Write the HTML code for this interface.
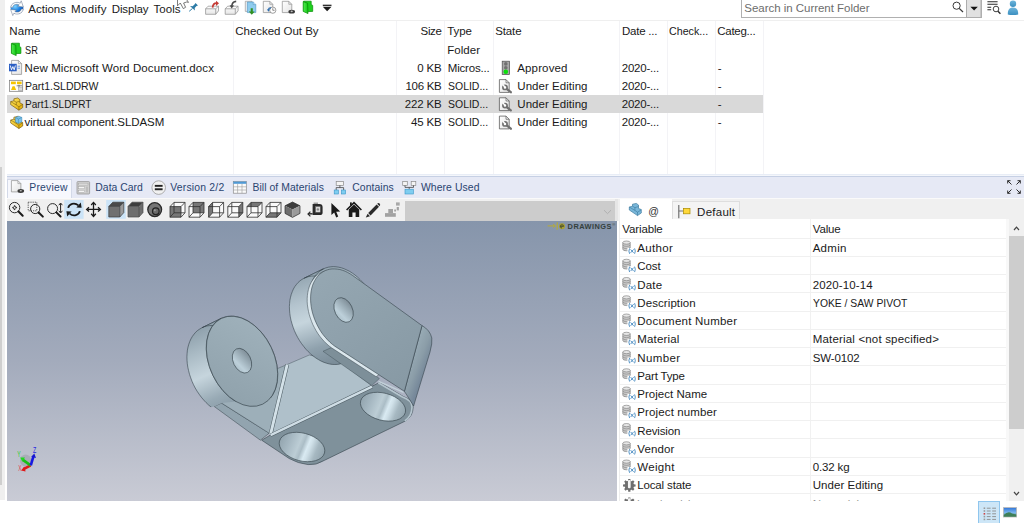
<!DOCTYPE html>
<html>
<head>
<meta charset="utf-8">
<title>PDM File Explorer</title>
<style>
html,body{margin:0;padding:0;}
body{width:1024px;height:523px;overflow:hidden;background:#fff;position:relative;font-family:"Liberation Sans", sans-serif;}
.a{position:absolute;}
.t{position:absolute;white-space:pre;line-height:16px;height:16px;}
.v{position:absolute;width:1px;background:#f3f3f6;top:21px;height:153px;}
.h{position:absolute;height:1px;background:#f0f0f0;left:620px;width:386px;}
svg{position:absolute;left:0;top:0;}
</style>
</head>
<body>
<div class="a" style="left:0px;top:0px;width:4.5px;height:500.4px;background:#efefef;"></div>
<div class="a" style="left:0px;top:167.3px;width:2.3px;height:317.3px;background:#cfcfcf;"></div>
<div class="a" style="left:0px;top:501px;width:1024px;height:22px;background:#ffffff;"></div>
<div class="a" style="left:7px;top:20px;width:1017px;height:1px;background:#efefef;"></div>
<div class="v" style="left:233px"></div>
<div class="v" style="left:396px"></div>
<div class="v" style="left:444px"></div>
<div class="v" style="left:493px"></div>
<div class="v" style="left:619px"></div>
<div class="v" style="left:667px"></div>
<div class="v" style="left:715px"></div>
<div class="v" style="left:763px"></div>
<div class="a" style="left:7px;top:95px;width:756px;height:18px;background:#d9d9d9;"></div>
<div class="a" style="left:741px;top:-1px;width:239px;height:17px;background:#fff;border:1px solid #b0b0b0;"></div>
<div class="a" style="left:7px;top:174px;width:1017px;height:1px;background:#e8edf6;"></div>
<div class="a" style="left:7px;top:175px;width:1017px;height:1px;background:#f4f6fb;"></div>
<div class="a" style="left:7px;top:176px;width:1017px;height:22px;background:#e6e9f5;border-top:1px solid #c6d0e4;box-sizing:border-box;"></div>
<div class="a" style="left:7px;top:178.5px;width:64.5px;height:19.5px;background:#f7f8fd;border:1px solid #d3d9e8;border-bottom:none;box-sizing:border-box;"></div>
<div class="a" style="left:7px;top:198px;width:1017px;height:1.4px;background:#fafafa;"></div>
<div class="a" style="left:7px;top:199.4px;width:398px;height:21.8px;background:#f0f0f0;"></div>
<div class="a" style="left:405px;top:199.4px;width:210px;height:1.3px;background:#f0f0f0;"></div>
<div class="a" style="left:405px;top:200.7px;width:210px;height:20.5px;background:#cccccc;"></div>
<div class="a" style="left:615px;top:199.4px;width:2.5px;height:21.8px;background:#e6e6e6;"></div>
<div class="a" style="left:617.5px;top:198.6px;width:406.5px;height:302.4px;background:#f0f0f0;"></div>
<div class="a" style="left:617.5px;top:221px;width:2px;height:279.7px;background:#ffffff;"></div>
<div class="a" style="left:619.6px;top:199.4px;width:52.6px;height:21px;background:#ffffff;"></div>
<div class="a" style="left:672.2px;top:201.2px;width:67.6px;height:18.4px;background:#f4f4f4;border:1px solid #dedede;border-bottom:none;box-sizing:border-box;"></div>
<div class="a" style="left:619.5px;top:219.4px;width:386px;height:281.3px;background:#ffffff;"></div>
<div class="a" style="left:1005.5px;top:219.4px;width:3.2px;height:281.3px;background:#f8f8f8;"></div>
<div class="a" style="left:1008.7px;top:219.4px;width:15.3px;height:281.6px;background:#f0f0f0;"></div>
<div class="a" style="left:1008.7px;top:236px;width:15.3px;height:193.4px;background:#cdcdcd;"></div>
<div class="a" style="left:810px;top:219.4px;width:1px;height:281.3px;background:#f1f1f1;"></div>
<div class="a" style="left:619.2px;top:221px;width:1px;height:279.7px;background:#ededed;"></div>
<div class="h" style="top:238px"></div>
<div class="h" style="top:256px"></div>
<div class="h" style="top:274px"></div>
<div class="h" style="top:292px"></div>
<div class="h" style="top:311px"></div>
<div class="h" style="top:329px"></div>
<div class="h" style="top:347px"></div>
<div class="h" style="top:365px"></div>
<div class="h" style="top:384px"></div>
<div class="h" style="top:402px"></div>
<div class="h" style="top:420px"></div>
<div class="h" style="top:438px"></div>
<div class="h" style="top:457px"></div>
<div class="h" style="top:475px"></div>
<div class="h" style="top:493px"></div>
<svg width="1024" height="523" viewBox="0 0 1024 523">
<defs>
<linearGradient id="gview" x1="0" y1="0" x2="0" y2="1"><stop offset="0" stop-color="#8695ab"/><stop offset="0.5" stop-color="#a3abbc"/><stop offset="1" stop-color="#c9cbd5"/></linearGradient>
<linearGradient id="gcyl1" gradientUnits="userSpaceOnUse" x1="205" y1="322" x2="245" y2="412"><stop offset="0" stop-color="#8a9ca8"/><stop offset="0.25" stop-color="#a9bac4"/><stop offset="0.5" stop-color="#c6d5dd"/><stop offset="0.75" stop-color="#98aab5"/><stop offset="1" stop-color="#7f919d"/></linearGradient>
<linearGradient id="gcyl2" gradientUnits="userSpaceOnUse" x1="305" y1="272" x2="335" y2="362"><stop offset="0" stop-color="#90a2ae"/><stop offset="0.3" stop-color="#b4c4ce"/><stop offset="0.5" stop-color="#c6d5dd"/><stop offset="0.8" stop-color="#8fa1ad"/><stop offset="1" stop-color="#7b8d99"/></linearGradient>
<linearGradient id="gface1" gradientUnits="userSpaceOnUse" x1="215" y1="325" x2="270" y2="400"><stop offset="0" stop-color="#9fb1bb"/><stop offset="1" stop-color="#8fa1ab"/></linearGradient>
<linearGradient id="gear" gradientUnits="userSpaceOnUse" x1="320" y1="270" x2="410" y2="390"><stop offset="0" stop-color="#95a7b2"/><stop offset="1" stop-color="#8799a4"/></linearGradient>
<linearGradient id="gbend" gradientUnits="userSpaceOnUse" x1="410" y1="350" x2="430" y2="358"><stop offset="0" stop-color="#9cafb9"/><stop offset="0.6" stop-color="#8b9da8"/><stop offset="1" stop-color="#76889a"/></linearGradient>
<linearGradient id="ghole" gradientUnits="userSpaceOnUse" x1="238" y1="349" x2="246" y2="373"><stop offset="0" stop-color="#727f89"/><stop offset="0.3" stop-color="#93a4ae"/><stop offset="0.68" stop-color="#bdd0da"/><stop offset="1" stop-color="#a3b6c0"/></linearGradient>
<linearGradient id="ghole2" gradientUnits="userSpaceOnUse" x1="339.6" y1="298.3" x2="347.6" y2="322.3"><stop offset="0" stop-color="#727f89"/><stop offset="0.3" stop-color="#93a4ae"/><stop offset="0.68" stop-color="#bdd0da"/><stop offset="1" stop-color="#a3b6c0"/></linearGradient>
<linearGradient id="gbh1" gradientUnits="userSpaceOnUse" x1="279" y1="443" x2="325" y2="449"><stop offset="0" stop-color="#93a5af"/><stop offset="0.2" stop-color="#a5b7c1"/><stop offset="0.42" stop-color="#bccdd5"/><stop offset="0.51" stop-color="#abbdc6"/><stop offset="0.61" stop-color="#d9eaf2"/><stop offset="0.67" stop-color="#cfe0e8"/><stop offset="0.82" stop-color="#a6b8c1"/><stop offset="1" stop-color="#93a5af"/></linearGradient>
<linearGradient id="gbh2" gradientUnits="userSpaceOnUse" x1="360.4" y1="403" x2="405.6" y2="409"><stop offset="0" stop-color="#93a5af"/><stop offset="0.2" stop-color="#a5b7c1"/><stop offset="0.42" stop-color="#bccdd5"/><stop offset="0.51" stop-color="#abbdc6"/><stop offset="0.61" stop-color="#d9eaf2"/><stop offset="0.67" stop-color="#cfe0e8"/><stop offset="0.82" stop-color="#a6b8c1"/><stop offset="1" stop-color="#93a5af"/></linearGradient>
</defs>
<rect x="7" y="221" width="610" height="280" fill="url(#gview)"/>
<polygon points="214.1,406.4 221.6,403.1 269.2,433.2 260.4,440.2" fill="#92a4af" stroke="#36434b" stroke-width="0.5"/>
<polygon points="221.6,403.1 250,380 287.2,364.5 270.4,434.7 269.2,433.2" fill="#9dafb9" stroke="#36434b" stroke-width="0.4"/>
<polygon points="287.2,364.5 309.3,355 340,362 372,386 270.4,435.5" fill="#afc0ca" stroke="#36434b" stroke-width="0.4"/>
<line x1="287.2" y1="364.5" x2="270.6" y2="434.2" stroke="#4a5860" stroke-width="3.9"/>
<line x1="287.2" y1="364.5" x2="270.6" y2="434.2" stroke="#d3e1e8" stroke-width="2.9"/>
<path d="M261.7,440.2 L270.4,435 L372,386.3 L379.4,382.4 L403.2,396.4 Q413.5,400 413.2,407 Q413,416 406,420.7 L324.3,460.4 Q316,465.5 308,464.6 Q298,463.5 289.2,458.5 Z" fill="#7f919b" stroke="#36434b" stroke-width="0.6"/>
<path d="M379.4,382.4 L403.2,396.4 Q413.5,400 413.2,407 Q413,416 406,420.7" fill="none" stroke="#b5c5ce" stroke-width="1.6" transform="translate(-1.2 0.3)"/>
<line x1="270.6" y1="435.2" x2="372" y2="386.6" stroke="#4a5860" stroke-width="3.4"/>
<line x1="270.6" y1="435.2" x2="372" y2="386.6" stroke="#cfdde5" stroke-width="2.4"/>
<ellipse cx="302" cy="447" rx="23.3" ry="13.9" transform="rotate(14.8 302 447)" fill="url(#gbh1)" stroke="#36434b" stroke-width="0.6"/>
<ellipse cx="383" cy="406.7" rx="23.1" ry="13.6" transform="rotate(14.8 383 406.7)" fill="url(#gbh2)" stroke="#36434b" stroke-width="0.6"/>
<path d="M344.7,362.3 L342.4,363.3 L340.0,363.9 L337.5,364.4 L334.9,364.5 L332.2,364.4 L329.5,364.0 L326.8,363.3 L324.1,362.4 L321.3,361.2 L318.6,359.7 L315.9,358.0 L313.3,356.1 L310.7,354.0 L308.2,351.6 L305.8,349.1 L303.6,346.3 L301.4,343.4 L299.4,340.4 L297.6,337.3 L295.9,334.0 L294.4,330.7 L293.1,327.2 L292.0,323.8 L291.0,320.3 L290.3,316.9 L289.8,313.4 L289.5,310.0 L289.4,306.6 L289.6,303.4 L289.9,300.2 L290.5,297.2 L291.3,294.3 L292.3,291.6 L293.4,289.0 L294.8,286.6 L296.4,284.5 L298.1,282.5 L300.0,280.8 L302.0,279.4 L304.2,278.2 L323.5,268.8 L325.8,267.9 L328.2,267.2 L330.8,266.8 L333.3,266.6 L336.0,266.8 L338.7,267.2 L341.4,267.8 L344.2,268.8 L346.9,270.0 L349.7,271.4 L352.3,273.1 L355.0,275.0 L357.6,277.2 L360.0,279.5 L362.4,282.1 L364.7,284.8 L366.8,287.7 L368.8,290.7 L370.7,293.9 L372.4,297.1 L373.9,300.5 L375.2,303.9 L376.3,307.3 L377.2,310.8 L377.9,314.3 L378.4,317.7 L378.7,321.1 L378.8,324.5 L378.7,327.8 L378.3,330.9 L377.8,334.0 L377.0,336.8 L376.0,339.6 L374.8,342.1 L373.5,344.5 L371.9,346.7 L370.2,348.6 L368.3,350.3 L366.2,351.8 L364.1,353.0Z" fill="url(#gcyl2)" stroke="#36434b" stroke-width="0.6"/>
<path d="M304.2,278.2 L306.5,277.2 L308.9,276.5 L311.4,276.1 L314.0,276.0 L316.7,276.1 L319.4,276.5 L322.1,277.2 L324.8,278.1 L327.6,279.3 L330.3,280.7 L333.0,282.4 L335.6,284.4 L338.2,286.5 L340.7,288.9 L343.1,291.4 L345.3,294.1 L347.5,297.0 L349.5,300.0 L351.3,303.2 L353.0,306.5 L354.5,309.8 L355.8,313.2 L356.9,316.7 L357.9,320.1 L358.6,323.6 L359.1,327.1 L359.4,330.5 L359.5,333.8 L359.3,337.1 L359.0,340.2 L358.4,343.3 L357.6,346.2 L356.6,348.9 L355.5,351.5 L354.1,353.8 L352.5,356.0 L350.8,357.9 L348.9,359.6 L346.9,361.1 L344.7,362.3 L364.1,353.0 L361.8,353.9 L359.4,354.6 L356.8,355.0 L354.3,355.2 L351.6,355.0 L348.9,354.6 L346.2,354.0 L343.4,353.0 L340.7,351.8 L337.9,350.4 L335.3,348.7 L332.6,346.8 L330.0,344.6 L327.6,342.3 L325.2,339.7 L322.9,337.0 L320.8,334.1 L318.8,331.1 L316.9,327.9 L315.2,324.7 L313.7,321.3 L312.4,317.9 L311.3,314.5 L310.4,311.0 L309.7,307.5 L309.2,304.1 L308.9,300.7 L308.8,297.3 L308.9,294.0 L309.3,290.9 L309.8,287.8 L310.6,285.0 L311.6,282.2 L312.8,279.7 L314.1,277.3 L315.7,275.1 L317.4,273.2 L319.3,271.5 L321.4,270.0 L323.5,268.8Z" fill="url(#gcyl2)" stroke="#36434b" stroke-width="0.6"/>
<polygon points="323,351.3 334.3,346.3 379.4,378.5 371.9,385.5" fill="#7d8f99" stroke="#36434b" stroke-width="0.4"/>
<path d="M400.0,330.0 L349.5,277.2 L346.9,275.5 L344.3,274.1 L341.7,272.8 L339.1,271.9 L336.5,271.1 L333.9,270.7 L331.4,270.5 L328.9,270.5 L326.5,270.8 L324.2,271.4 L322.0,272.2 L319.8,273.3 L317.9,274.6 L316.0,276.1 L314.3,277.9 L312.8,279.9 L311.4,282.0 L310.2,284.4 L309.2,286.9 L308.4,289.6 L307.8,292.5 L307.4,295.5 L307.2,298.5 L307.2,301.7 L307.4,304.9 L307.9,308.2 L308.5,311.5 L309.3,314.8 L310.3,318.0 L311.5,321.3 L312.8,324.5 L314.4,327.6 L316.1,330.7 L317.9,333.6 L319.9,336.4 L322.0,339.0 L324.3,341.5 L326.6,343.8 L329.0,345.9 L331.5,347.8 L376.1,376.7 L381.4,373.1 Z" fill="#dbe7ed" stroke="#36434b" stroke-width="0.5"/>
<line x1="378.6" y1="381.4" x2="403.6" y2="392.4" stroke="#c3d2da" stroke-width="1.3"/>
<path d="M422,325.6 Q430,330 431.8,338 Q432.5,343 430,352 L413.6,406 Q410,400 404.4,391.3 Z" fill="url(#gbend)" stroke="#36434b" stroke-width="0.6"/>
<path d="M422.0,325.6 L352.8,275.6 L350.2,273.9 L347.7,272.5 L345.1,271.2 L342.5,270.3 L339.9,269.5 L337.3,269.1 L334.7,268.9 L332.2,268.9 L329.8,269.2 L327.5,269.8 L325.3,270.6 L323.2,271.7 L321.2,273.0 L319.3,274.5 L317.7,276.3 L316.1,278.3 L314.8,280.4 L313.6,282.8 L312.6,285.3 L311.8,288.0 L311.2,290.9 L310.8,293.8 L310.6,296.9 L310.6,300.1 L310.8,303.3 L311.2,306.6 L311.8,309.9 L312.6,313.2 L313.6,316.4 L314.8,319.7 L316.2,322.9 L317.7,326.0 L319.4,329.1 L321.2,332.0 L323.2,334.8 L325.4,337.4 L327.6,339.9 L329.9,342.2 L332.3,344.3 L334.8,346.2 L404.4,391.3 Z" fill="url(#gear)" stroke="#36434b" stroke-width="0.6"/>
<ellipse cx="343.6" cy="310.0" rx="13.0" ry="8.8" transform="rotate(64.3 343.6 310.0)" fill="url(#ghole2)" stroke="#36434b" stroke-width="0.6"/>
<clipPath id="cl1"><polygon points="150,280 300,280 300,395 221.6,403.1 214.1,406.4 150,420"/></clipPath>
<g clip-path="url(#cl1)"><path d="M243.3,413.5 L241.0,414.5 L238.5,415.2 L236.0,415.6 L233.3,415.8 L230.6,415.7 L227.8,415.2 L225.1,414.6 L222.3,413.6 L219.5,412.4 L216.7,410.9 L213.9,409.2 L211.2,407.2 L208.6,405.0 L206.1,402.6 L203.7,400.0 L201.3,397.2 L199.2,394.3 L197.1,391.2 L195.2,388.0 L193.5,384.7 L192.0,381.3 L190.7,377.8 L189.5,374.3 L188.6,370.7 L187.8,367.2 L187.3,363.7 L187.0,360.2 L186.9,356.8 L187.1,353.4 L187.4,350.2 L188.0,347.1 L188.8,344.2 L189.8,341.4 L191.0,338.8 L192.4,336.4 L194.0,334.2 L195.7,332.2 L197.7,330.4 L199.8,329.0 L202.0,327.7 L221.3,318.4 L223.7,317.4 L226.1,316.7 L228.7,316.3 L231.3,316.1 L234.0,316.3 L236.8,316.7 L239.6,317.4 L242.4,318.3 L245.2,319.5 L248.0,321.0 L250.7,322.7 L253.4,324.7 L256.0,326.9 L258.6,329.3 L261.0,331.9 L263.3,334.7 L265.5,337.6 L267.5,340.7 L269.4,343.9 L271.1,347.3 L272.7,350.7 L274.0,354.1 L275.1,357.7 L276.1,361.2 L276.8,364.7 L277.3,368.3 L277.6,371.7 L277.7,375.2 L277.6,378.5 L277.2,381.7 L276.6,384.8 L275.8,387.8 L274.8,390.6 L273.6,393.2 L272.2,395.6 L270.7,397.8 L268.9,399.8 L267.0,401.5 L264.9,403.0 L262.7,404.2Z" fill="url(#gcyl1)" stroke="#36434b" stroke-width="0.6"/>
<path d="M202.0,327.7 L204.3,326.7 L206.8,326.0 L209.3,325.6 L212.0,325.5 L214.7,325.6 L217.5,326.0 L220.2,326.7 L223.0,327.7 L225.8,328.9 L228.6,330.4 L231.4,332.1 L234.1,334.0 L236.7,336.2 L239.2,338.6 L241.6,341.2 L244.0,344.0 L246.1,347.0 L248.2,350.0 L250.1,353.3 L251.8,356.6 L253.3,360.0 L254.6,363.5 L255.8,367.0 L256.7,370.5 L257.5,374.1 L258.0,377.6 L258.3,381.1 L258.4,384.5 L258.2,387.8 L257.9,391.0 L257.3,394.1 L256.5,397.1 L255.5,399.9 L254.3,402.5 L252.9,404.9 L251.3,407.1 L249.6,409.1 L247.6,410.8 L245.5,412.3 L243.3,413.5 L262.7,404.2 L260.3,405.2 L257.9,405.9 L255.3,406.3 L252.7,406.5 L250.0,406.3 L247.2,405.9 L244.4,405.2 L241.6,404.3 L238.8,403.1 L236.0,401.6 L233.3,399.9 L230.6,397.9 L228.0,395.7 L225.4,393.3 L223.0,390.7 L220.7,387.9 L218.5,385.0 L216.5,381.9 L214.6,378.7 L212.9,375.3 L211.3,371.9 L210.0,368.5 L208.9,364.9 L207.9,361.4 L207.2,357.9 L206.7,354.3 L206.4,350.9 L206.3,347.4 L206.4,344.1 L206.8,340.9 L207.4,337.8 L208.2,334.8 L209.2,332.0 L210.4,329.4 L211.8,327.0 L213.3,324.8 L215.1,322.8 L217.0,321.1 L219.1,319.6 L221.3,318.4Z" fill="url(#gcyl1)" stroke="#36434b" stroke-width="0.6"/></g>
<ellipse cx="242.0" cy="361.3" rx="47.6" ry="32.3" transform="rotate(64.3 242.0 361.3)" fill="url(#gface1)" stroke="#36434b" stroke-width="0.6"/>
<ellipse cx="242.0" cy="360.7" rx="13.0" ry="8.8" transform="rotate(64.3 242.0 360.7)" fill="url(#ghole)" stroke="#36434b" stroke-width="0.6"/>
<ellipse cx="25.6" cy="460.6" rx="5.6" ry="6" fill="#a9adb8"/>
<line x1="30.6" y1="465.4" x2="23.6" y2="469.2" stroke="#e01818" stroke-width="2.6"/><polygon points="21,470.6 24.4,466.6 25.6,471.4" fill="#e01818"/>
<line x1="30.6" y1="465.4" x2="22.6" y2="459.6" stroke="#18c018" stroke-width="2.6"/><polygon points="20.2,457.6 25,457.4 22.4,461.8" fill="#20d820"/>
<line x1="30.8" y1="465.4" x2="33.4" y2="456.4" stroke="#1818e0" stroke-width="2.6"/><polygon points="34.3,453.6 36,458 31.2,456.8" fill="#1818d0"/>
<defs>
<radialGradient id="gglobe" cx="0.35" cy="0.35" r="0.8"><stop offset="0" stop-color="#7fd3ff"/><stop offset="0.5" stop-color="#1c7fe0"/><stop offset="1" stop-color="#123c9c"/></radialGradient>
<linearGradient id="gbox" x1="0" y1="0" x2="0" y2="1"><stop offset="0" stop-color="#ffffff"/><stop offset="1" stop-color="#e6e6e6"/></linearGradient>
<linearGradient id="gpage" x1="0" y1="0" x2="1" y2="1"><stop offset="0" stop-color="#ffffff"/><stop offset="1" stop-color="#e4e4e4"/></linearGradient>
<linearGradient id="ggreen" x1="0" y1="0" x2="1" y2="0"><stop offset="0" stop-color="#55ee55"/><stop offset="1" stop-color="#10c410"/></linearGradient>
<linearGradient id="gyel" x1="0" y1="0" x2="1" y2="1"><stop offset="0" stop-color="#ffe766"/><stop offset="1" stop-color="#e0a800"/></linearGradient>
<linearGradient id="gcubeF" x1="0" y1="0" x2="0" y2="1"><stop offset="0" stop-color="#7a7a7a"/><stop offset="1" stop-color="#6a6a6a"/></linearGradient>
<linearGradient id="gperson" x1="0" y1="0" x2="0" y2="1"><stop offset="0" stop-color="#6fb6dc"/><stop offset="1" stop-color="#3b8fc0"/></linearGradient>
<linearGradient id="gpic" x1="0" y1="0" x2="0" y2="1"><stop offset="0" stop-color="#2f74d8"/><stop offset="0.55" stop-color="#7db8ee"/><stop offset="1" stop-color="#4b8a5a"/></linearGradient>
</defs><g transform="translate(10 0.6)"><ellipse cx="7" cy="7.5" rx="6.4" ry="5.7" fill="url(#gglobe)"/><path d="M0.7,6.8 C1.2,2.6 6.4,0.4 10.2,2.6 L11.2,0.2 L13.4,6.4 L7.6,5.6 L9.2,4.3 C6.6,3 3.2,3.8 2.6,6.8 Z" fill="#ffffff" stroke="#6d7a92" stroke-width="0.55"/><g transform="rotate(180 7 7.6)"><path d="M0.7,6.8 C1.2,2.6 6.4,0.4 10.2,2.6 L11.2,0.2 L13.4,6.4 L7.6,5.6 L9.2,4.3 C6.6,3 3.2,3.8 2.6,6.8 Z" fill="#ffffff" stroke="#6d7a92" stroke-width="0.55"/></g></g><path d="M177.5,-1 V5.8 L180.3,3 L183.3,8.6 L185.6,7.3 L183.6,3 L186.7,2 L188.5,2.4 L186.2,-1" fill="#fff" stroke="#444" stroke-width="0.7"/><path d="M195.5,2.9 L198,5.4 L196.5,6 L194.7,7.9 L194.9,10.4 L190,6.1 L192.6,6.2 L194.5,4.4 Z" fill="#2d7ba6"/><path d="M192.5,8.4 L189.2,11.3" stroke="#2d7ba6" stroke-width="1" fill="none"/><g transform="translate(205.3 0)"><path d="M0.3,8.8 L2.8,6.2 L13.2,6.2 L13.2,10.9 L10.4,14.3 L0.3,14.3 Z" fill="url(#gbox)" stroke="#8c8c8c" stroke-width="0.7"/><path d="M0.3,8.8 L10.4,8.8 L13.2,6.2 M10.4,8.8 L10.4,14.3" fill="none" stroke="#8c8c8c" stroke-width="0.7"/></g><path d="M212.6,7.6 C212.8,4.6 214.6,3.2 216.6,3.2" fill="none" stroke="#c43a34" stroke-width="1.7"/><polygon points="216,0.7 219,3.3 216,5.9" fill="#c43a34"/><g transform="translate(224.9 0)"><path d="M0.3,8.8 L2.8,6.2 L13.2,6.2 L13.2,10.9 L10.4,14.3 L0.3,14.3 Z" fill="url(#gbox)" stroke="#8c8c8c" stroke-width="0.7"/><path d="M0.3,8.8 L10.4,8.8 L13.2,6.2 M10.4,8.8 L10.4,14.3" fill="none" stroke="#8c8c8c" stroke-width="0.7"/></g><path d="M236.2,1.4 C233.6,1.6 232,3.6 231.8,6" fill="none" stroke="#4a4a4a" stroke-width="1.6"/><polygon points="229.6,5.2 234.2,5.6 231.6,8.6" fill="#4a4a4a"/><path d="M245.3,1.3 L252,1.3 L252,11.4 L245.3,11.4Z" fill="#f4f4f4" stroke="#8a8a8a" stroke-width="0.6"/><path d="M247.3,2.0 L253.2,2.0 L255.8,4.6 L255.8,12.6 L247.3,12.6Z" fill="#8fccee" stroke="#4a90c0" stroke-width="0.6"/><path d="M253.2,2.0 L253.2,4.6 L255.8,4.6" fill="#c9e7f7" stroke="#4a90c0" stroke-width="0.5"/><path d="M250.7,8.2 L252.8,8.2 L252.8,11.6 L254.7,11.6 L251.75,14.7 L248.8,11.6 L250.7,11.6Z" fill="#2f8f20"/><path d="M263.3,1.3 h6.5 l3,3 v8.3 h-9.5 Z" fill="url(#gpage)" stroke="#8c8c8c" stroke-width="0.7"/><path d="M269.8,1.3 v3 h3" fill="none" stroke="#8c8c8c" stroke-width="0.6"/><circle cx="272.8" cy="10.2" r="3.1" fill="#fff" stroke="#777" stroke-width="0.7"/><path d="M272.8,8.2 V10.3 H274.6" stroke="#444" stroke-width="0.6" fill="none"/><path d="M271,8 C269.6,7.8 268.6,8.6 268.4,9.8" stroke="#2b6cb0" stroke-width="1.3" fill="none"/><polygon points="267,9.2 270,9.6 268.3,11.8" fill="#2b6cb0"/><path d="M282.3,1.3 h6.5 l3,3 v8.3 h-9.5 Z" fill="url(#gpage)" stroke="#8c8c8c" stroke-width="0.7"/><path d="M288.8,1.3 v3 h3" fill="none" stroke="#8c8c8c" stroke-width="0.6"/><ellipse cx="291.7" cy="11.700000000000001" rx="3.3" ry="1.9" fill="#3a3a3a"/><ellipse cx="291.7" cy="11.4" rx="1.1" ry="0.8" fill="#bbb"/><g transform="translate(303 1)"><path d="M0.6,0.2 L8.2,0.2 L8.2,3.4 L9.7,4.4 L9.7,10.4 L4.8,10.6 L0.6,10 Z" fill="#1fd01f" stroke="#078a07" stroke-width="0.7"/><path d="M0.2,0.6 L4.6,2.2 L5,12.6 L0.2,10.4 Z" fill="url(#ggreen)" stroke="#078a07" stroke-width="0.7"/></g><rect x="322.8" y="4.7" width="8.7" height="1.2" fill="#1a1a1a"/><polygon points="322.8,6.7 331.5,6.7 327.15,11.2" fill="#1a1a1a"/><circle cx="956.6" cy="5.7" r="3.6" fill="none" stroke="#3a3a3a" stroke-width="1"/><line x1="959.2" y1="8.4" x2="963" y2="12" stroke="#3a3a3a" stroke-width="1.3"/><rect x="966.5" y="-0.5" width="14.5" height="18" fill="#e1e1e1" stroke="#adadad" stroke-width="1"/><polygon points="970.4,6.7 977.8,6.7 974.1,10.4" fill="#111"/><path d="M987.4,1.7 H997.6 M987.4,4.2 H997.6 M987.4,7.2 H991.2 M987.4,9.7 H991.2" stroke="#2a2a2a" stroke-width="1.1"/><circle cx="996" cy="9" r="2.8" fill="#fff" stroke="#2a2a2a" stroke-width="0.9"/><line x1="998" y1="11.2" x2="1000.4" y2="13.8" stroke="#2a2a2a" stroke-width="1.3"/><circle cx="1013" cy="3.8" r="3.2" fill="url(#gperson)"/><path d="M1007.8,14.4 C1007.6,9.6 1009.6,7.4 1013,7.4 C1016.4,7.4 1018.4,9.6 1018.2,14.4 C1016,15.2 1010,15.2 1007.8,14.4Z" fill="url(#gperson)"/><g transform="translate(11.2 43)"><path d="M0.6,0.2 L8.2,0.2 L8.2,3.4 L9.7,4.4 L9.7,10.4 L4.8,10.6 L0.6,10 Z" fill="#1fd01f" stroke="#078a07" stroke-width="0.7"/><path d="M0.2,0.6 L4.6,2.2 L5,12.6 L0.2,10.4 Z" fill="url(#ggreen)" stroke="#078a07" stroke-width="0.7"/></g><path d="M11.6,60.4 h6.8 l3.2,3.2 v10.8 h-10 Z" fill="url(#gpage)" stroke="#8c8c8c" stroke-width="0.7"/><path d="M18.400000000000002,60.4 v3.2 h3.2" fill="none" stroke="#8c8c8c" stroke-width="0.6"/><rect x="9" y="63.8" width="7.7" height="7.5" fill="#2b5fc4"/><path d="M10.3,65.5 L11.5,69.8 L12.85,66.6 L14.2,69.8 L15.4,65.5" fill="none" stroke="#fff" stroke-width="0.9"/><path d="M17.6,66.2 H20 M17.6,68.2 H20" stroke="#5a8fe0" stroke-width="0.9"/><rect x="9.5" y="80.3" width="13.2" height="11" fill="#fdfdfd" stroke="#777" stroke-width="0.7"/><rect x="11" y="81.6" width="4.8" height="2.6" fill="#f5c400"/><rect x="17" y="81.6" width="4.6" height="2.6" fill="#f5c400"/><path d="M11,90 L12.6,86.2 L14.6,86.2 L16.2,90Z" fill="#f5c400"/><path d="M16.6,85.8 H22 M19,84.8 V87" stroke="#555" stroke-width="0.7"/><rect x="18.2" y="87.6" width="4" height="3.2" fill="#ddd" stroke="#888" stroke-width="0.4"/><g transform="translate(10.3 97.8)"><path d="M3.6,1.0 L7.4,0.2 L9.6,1.8 L9.6,5.2 L12.4,6.4 L12.4,9.8 L8.6,12.4 L0.4,6.8 L0.4,3.8 L3.6,3.0 Z" fill="url(#gyel)" stroke="#6b4e00" stroke-width="0.6"/><path d="M3.6,3 L6.0,4.4 L9.6,3.4 M6,4.4 L6,7.2 L8.6,9 L12.4,6.6 M8.6,9 L8.6,12.4 M0.4,3.8 L6,7.2" fill="none" stroke="#6b4e00" stroke-width="0.5"/></g><g transform="translate(10.3 116.2)"><path d="M3.6,1.0 L7.4,0.2 L9.6,1.8 L9.6,5.2 L12.4,6.4 L12.4,9.8 L8.6,12.4 L0.4,6.8 L0.4,3.8 L3.6,3.0 Z" fill="url(#gyel)" stroke="#6b4e00" stroke-width="0.6"/><path d="M3.6,3 L6.0,4.4 L9.6,3.4 M6,4.4 L6,7.2 L8.6,9 L12.4,6.6 M8.6,9 L8.6,12.4 M0.4,3.8 L6,7.2" fill="none" stroke="#6b4e00" stroke-width="0.5"/></g><path d="M15.4,117.6 L18.8,116.2 L21.8,117.4 L21.8,122 L18.4,123.6 L15.4,122 Z" fill="#7cc3ea" stroke="#2f7fb0" stroke-width="0.5"/><path d="M15.4,117.6 L18.4,119 L21.8,117.4 M18.4,119 L18.4,123.6" fill="none" stroke="#2f7fb0" stroke-width="0.5"/><rect x="502.2" y="61.2" width="7.3" height="13.4" fill="#a8a8a8" stroke="#4c4c4c" stroke-width="0.7"/><circle cx="505.8" cy="63.9" r="1.8" fill="#707070"/><circle cx="505.8" cy="67.7" r="1.8" fill="#707070"/><circle cx="505.8" cy="71.8" r="2.3" fill="#0be00b"/><path d="M499.4,79.6 h6.6000000000000005 l3.2,3.2 v9.600000000000001 h-9.8 Z" fill="url(#gpage)" stroke="#4a4a4a" stroke-width="0.7"/><path d="M506.0,79.6 v3.2 h3.2" fill="none" stroke="#4a4a4a" stroke-width="0.6"/><path d="M506.4,88.7 L510.8,92.2" stroke="#707070" stroke-width="2.3" stroke-linecap="round"/><circle cx="505" cy="87.39999999999999" r="2.1" fill="#fff" stroke="#707070" stroke-width="1.7"/><path d="M505,87.39999999999999 L503,84.7" stroke="#fff" stroke-width="1.5"/><path d="M499.4,97.8 h6.6000000000000005 l3.2,3.2 v9.600000000000001 h-9.8 Z" fill="url(#gpage)" stroke="#4a4a4a" stroke-width="0.7"/><path d="M506.0,97.8 v3.2 h3.2" fill="none" stroke="#4a4a4a" stroke-width="0.6"/><path d="M506.4,106.9 L510.8,110.4" stroke="#707070" stroke-width="2.3" stroke-linecap="round"/><circle cx="505" cy="105.6" r="2.1" fill="#fff" stroke="#707070" stroke-width="1.7"/><path d="M505,105.6 L503,102.9" stroke="#fff" stroke-width="1.5"/><path d="M499.4,116.1 h6.6000000000000005 l3.2,3.2 v9.600000000000001 h-9.8 Z" fill="url(#gpage)" stroke="#4a4a4a" stroke-width="0.7"/><path d="M506.0,116.1 v3.2 h3.2" fill="none" stroke="#4a4a4a" stroke-width="0.6"/><path d="M506.4,125.2 L510.8,128.7" stroke="#707070" stroke-width="2.3" stroke-linecap="round"/><circle cx="505" cy="123.89999999999999" r="2.1" fill="#fff" stroke="#707070" stroke-width="1.7"/><path d="M505,123.89999999999999 L503,121.2" stroke="#fff" stroke-width="1.5"/><path d="M11.4,180.6 h6.5 l3,3 v8.3 h-9.5 Z" fill="url(#gpage)" stroke="#8c8c8c" stroke-width="0.7"/><path d="M17.9,180.6 v3 h3" fill="none" stroke="#8c8c8c" stroke-width="0.6"/><ellipse cx="20.8" cy="191.0" rx="3.3" ry="1.9" fill="#3a3a3a"/><ellipse cx="20.8" cy="190.7" rx="1.1" ry="0.8" fill="#bbb"/><rect x="77" y="181.6" width="12.6" height="12.4" rx="0.8" fill="#cfcfcf" stroke="#8e8e8e" stroke-width="0.7"/><rect x="78.6" y="183.2" width="9.4" height="1.8" fill="#e9e9e9" stroke="#999" stroke-width="0.4"/><rect x="78.6" y="186.6" width="6" height="2.2" fill="#f4f4f4" stroke="#999" stroke-width="0.4"/><rect x="78.6" y="190.2" width="6" height="2.2" fill="#f4f4f4" stroke="#999" stroke-width="0.4"/><rect x="86" y="186.6" width="2" height="5.8" fill="#bdbdbd"/><circle cx="158.7" cy="187.6" r="6.8" fill="#f1f1f1" stroke="#9a9a9a" stroke-width="0.8"/><rect x="154.8" y="184.9" width="7.8" height="1.9" fill="#222"/><rect x="154.8" y="188.3" width="7.8" height="1.9" fill="#222"/><rect x="233.3" y="181.6" width="13" height="11.6" fill="#fbfbfb" stroke="#8a8a8a" stroke-width="0.7"/><rect x="233.3" y="181.6" width="13" height="2.2" fill="#4f9ad6"/><path d="M233.3,186.8 H246.3 M233.3,190 H246.3 M237.6,183.8 V193.2 M242,183.8 V193.2" stroke="#9a9a9a" stroke-width="0.6"/><rect x="336.2" y="181.4" width="7.4" height="4" fill="#f4f4f4" stroke="#8a8a8a" stroke-width="0.7"/><path d="M339.9,185.4 V187.6 M336.2,190 V187.6 H343.6 V190" fill="none" stroke="#444" stroke-width="0.8"/><rect x="334.2" y="190" width="4.2" height="4" fill="#7fcdf0" stroke="#3a96c8" stroke-width="0.6"/><rect x="341.4" y="190" width="4.2" height="4" fill="#7fcdf0" stroke="#3a96c8" stroke-width="0.6"/><rect x="402.7" y="181.4" width="4.6" height="4" fill="#f4f4f4" stroke="#8a8a8a" stroke-width="0.7"/><rect x="411.2" y="181.4" width="4.6" height="4" fill="#f4f4f4" stroke="#8a8a8a" stroke-width="0.7"/><path d="M405,185.4 V187.4 H413.5 V185.4 M409.2,187.4 V189.2" fill="none" stroke="#444" stroke-width="0.8"/><rect x="405" y="189.2" width="8.4" height="4.8" fill="#7fcdf0" stroke="#3a96c8" stroke-width="0.6"/><path d="M1011.5,184.5 l-3.8,-3.8" stroke="#222" stroke-width="0.95"/><path d="M1010.5,180.7 h-2.8 v2.8" fill="none" stroke="#222" stroke-width="0.95"/><path d="M1016.5,184.5 l3.8,-3.8" stroke="#222" stroke-width="0.95"/><path d="M1017.5,180.7 h2.8 v2.8" fill="none" stroke="#222" stroke-width="0.95"/><path d="M1011.5,189.5 l-3.8,3.8" stroke="#222" stroke-width="0.95"/><path d="M1010.5,193.3 h-2.8 v-2.8" fill="none" stroke="#222" stroke-width="0.95"/><path d="M1016.5,189.5 l3.8,3.8" stroke="#222" stroke-width="0.95"/><path d="M1017.5,193.3 h2.8 v-2.8" fill="none" stroke="#222" stroke-width="0.95"/><circle cx="14.6" cy="207.6" r="5.2" fill="none" stroke="#2a2a2a" stroke-width="1"/><line x1="18.5" y1="211.5" x2="22.7" y2="215.7" stroke="#1a1a1a" stroke-width="2" stroke-linecap="round"/><path d="M12,207.6 l1.8,-1.6 v3.2z M17.2,207.6 l-1.8,-1.6 v3.2z M14.6,205 l-1.6,1.8 h3.2z M14.6,210.2 l-1.6,-1.8 h3.2z" fill="#2a2a2a"/><rect x="28.2" y="202.2" width="8.6" height="8.6" fill="none" stroke="#333" stroke-width="0.8" stroke-dasharray="1.2 1"/><circle cx="35.2" cy="209" r="4.6" fill="none" stroke="#2a2a2a" stroke-width="1"/><line x1="38.650000000000006" y1="212.45" x2="42.85000000000001" y2="216.64999999999998" stroke="#1a1a1a" stroke-width="2" stroke-linecap="round"/><circle cx="52.6" cy="208.6" r="5" fill="none" stroke="#2a2a2a" stroke-width="1"/><line x1="56.35" y1="212.35" x2="60.550000000000004" y2="216.54999999999998" stroke="#1a1a1a" stroke-width="2" stroke-linecap="round"/><path d="M60.6,203.6 V212.4 M58.8,205.2 L60.6,203 L62.4,205.2 M58.8,210.8 L60.6,213 L62.4,210.8" fill="none" stroke="#222" stroke-width="1"/><rect x="64.2" y="200" width="19.4" height="18.8" fill="#cce4f7"/><path d="M68.2,207.8 C69,203.8 74.6,202.2 78.4,205.4" fill="none" stroke="#1a1a1a" stroke-width="1.7"/><polygon points="76.4,207.4 81.6,207.8 80.8,202.6" fill="#1a1a1a"/><path d="M79.8,211.2 C79,215.2 73.4,216.8 69.6,213.6" fill="none" stroke="#1a1a1a" stroke-width="1.7"/><polygon points="71.6,211.6 66.4,211.2 67.2,216.4" fill="#1a1a1a"/><path d="M87.6,209.4 H99.4 M93.5,203.4 V215.4" stroke="#1a1a1a" stroke-width="1.3"/><path d="M91.2,205 L93.5,202.4 L95.8,205 M91.2,213.8 L93.5,216.4 L95.8,213.8 M89,207.2 L86.6,209.4 L89,211.6 M98,207.2 L100.4,209.4 L98,211.6" fill="none" stroke="#1a1a1a" stroke-width="1.3"/><rect x="106.2" y="200" width="19.6" height="18.8" fill="#cce4f7"/><g transform="translate(108.8 202.2)"><polygon points="0,4.2 4,0 15,0 11,4.2" fill="#4a4a4a"/><polygon points="11,4.2 15,0 15,10.4 11,14.8" fill="#9c9c9c"/><rect x="0" y="4.2" width="11" height="10.6" fill="#707070"/><path d="M0,4.2 L4,0 L15,0 L15,10.4 L11,14.8 L0,14.8 Z M0,4.2 H11 V14.8 M11,4.2 L15,0" fill="none" stroke="#3a3a3a" stroke-width="0.7"/></g><g transform="translate(128 202.2)"><polygon points="0,4.2 4,0 15,0 11,4.2" fill="#3e3e3e"/><polygon points="11,4.2 15,0 15,10.4 11,14.8" fill="#6e6e6e"/><rect x="0" y="4.2" width="11" height="10.6" fill="#6e6e6e"/><path d="M0,4.2 L4,0 L15,0 L15,10.4 L11,14.8 L0,14.8 Z M0,4.2 H11 V14.8 M11,4.2 L15,0" fill="none" stroke="#4a4a4a" stroke-width="0.7"/></g><circle cx="154.7" cy="209.6" r="6.9" fill="#757575" stroke="#2a2a2a" stroke-width="1.3"/><circle cx="155.8" cy="211.2" r="3.3" fill="#6a6a6a" stroke="#222" stroke-width="1.2"/><circle cx="154.8" cy="210.2" r="1" fill="#999"/><g transform="translate(170 202.4)"><path d="M0,4.2 L4,0 L15,0 L15,10.4 L11,14.8 L0,14.8 Z" fill="#fafafa"/><rect x="0" y="4.2" width="11" height="10.6" fill="#777"/><path d="M0,4.2 L4,0 L15,0 L15,10.4 L11,14.8 L0,14.8 Z M0,4.2 H11 V14.8 M11,4.2 L15,0 M4,0 V10.4 H15 M4,10.4 L0,14.8" fill="none" stroke="#2e2e2e" stroke-width="0.8"/></g><g transform="translate(189 202.4)"><path d="M0,4.2 L4,0 L15,0 L15,10.4 L11,14.8 L0,14.8 Z" fill="#fafafa"/><rect x="4" y="0" width="11" height="10.4" fill="#777"/><path d="M0,4.2 L4,0 L15,0 L15,10.4 L11,14.8 L0,14.8 Z M0,4.2 H11 V14.8 M11,4.2 L15,0 M4,0 V10.4 H15 M4,10.4 L0,14.8" fill="none" stroke="#2e2e2e" stroke-width="0.8"/></g><g transform="translate(208.6 202.4)"><path d="M0,4.2 L4,0 L15,0 L15,10.4 L11,14.8 L0,14.8 Z" fill="#fafafa"/><polygon points="0,4.2 4,0 4,10.4 0,14.8" fill="#777"/><path d="M0,4.2 L4,0 L15,0 L15,10.4 L11,14.8 L0,14.8 Z M0,4.2 H11 V14.8 M11,4.2 L15,0 M4,0 V10.4 H15 M4,10.4 L0,14.8" fill="none" stroke="#2e2e2e" stroke-width="0.8"/></g><g transform="translate(227.8 202.4)"><path d="M0,4.2 L4,0 L15,0 L15,10.4 L11,14.8 L0,14.8 Z" fill="#fafafa"/><polygon points="11,4.2 15,0 15,10.4 11,14.8" fill="#777"/><path d="M0,4.2 L4,0 L15,0 L15,10.4 L11,14.8 L0,14.8 Z M0,4.2 H11 V14.8 M11,4.2 L15,0 M4,0 V10.4 H15 M4,10.4 L0,14.8" fill="none" stroke="#2e2e2e" stroke-width="0.8"/></g><g transform="translate(247 202.4)"><path d="M0,4.2 L4,0 L15,0 L15,10.4 L11,14.8 L0,14.8 Z" fill="#fafafa"/><polygon points="0,4.2 4,0 15,0 11,4.2" fill="#777"/><path d="M0,4.2 L4,0 L15,0 L15,10.4 L11,14.8 L0,14.8 Z M0,4.2 H11 V14.8 M11,4.2 L15,0 M4,0 V10.4 H15 M4,10.4 L0,14.8" fill="none" stroke="#2e2e2e" stroke-width="0.8"/></g><g transform="translate(266 202.4)"><path d="M0,4.2 L4,0 L15,0 L15,10.4 L11,14.8 L0,14.8 Z" fill="#fafafa"/><polygon points="0,14.8 4,10.4 15,10.4 11,14.8" fill="#777"/><path d="M0,4.2 L4,0 L15,0 L15,10.4 L11,14.8 L0,14.8 Z M0,4.2 H11 V14.8 M11,4.2 L15,0 M4,0 V10.4 H15 M4,10.4 L0,14.8" fill="none" stroke="#2e2e2e" stroke-width="0.8"/></g><g transform="translate(285 202)"><polygon points="7.5,0 15,3.8 7.5,7.6 0,3.8" fill="#3c3c3c"/><polygon points="0,3.8 7.5,7.6 7.5,15.4 0,11.4" fill="#6e6e6e"/><polygon points="15,3.8 7.5,7.6 7.5,15.4 15,11.4" fill="#9a9a9a"/><path d="M7.5,0 L15,3.8 V11.4 L7.5,15.4 L0,11.4 V3.8Z" fill="none" stroke="#2e2e2e" stroke-width="0.7"/></g><path d="M312.6,204 H319.4 Q322.6,204 322.6,207 V212.4 Q322.6,215 319.6,215 H312.6 Z" fill="#2a2a2a"/><rect x="315.6" y="206.6" width="4.6" height="5.6" fill="#d8d8d8" stroke="#777" stroke-width="0.4"/><circle cx="317.9" cy="209.4" r="1.2" fill="#888"/><path d="M312.6,213.8 H308.4" stroke="#2a2a2a" stroke-width="1.4"/><path d="M310.4,211.6 L308,214 L310.4,216.4" fill="none" stroke="#2a2a2a" stroke-width="1.2"/><path d="M313.6,203.2 H318" stroke="#555" stroke-width="0.8"/><path d="M331.4,203 L331.4,215 L334.2,212.4 L336.2,217.4 L338.2,216.6 L336.2,211.8 L340.2,211.6 Z" fill="#1a1a1a"/><path d="M346.6,210 L354,202.6 L361.4,210" fill="none" stroke="#1a1a1a" stroke-width="1.6"/><path d="M348.8,209.6 L354,204.6 L359.2,209.6 V217 H355.6 V212.6 H352.4 V217 H348.8 Z" fill="#1a1a1a"/><rect x="350" y="202.4" width="1.8" height="3" fill="#1a1a1a"/><path d="M368.2,213 L376.6,204.4 L379,206.8 L370.6,215.4 Z" fill="#2a2a2a"/><path d="M377.2,203.8 Q378.4,202.4 379.6,203.6 Q380.8,204.8 379.6,206.2 Z" fill="#2a2a2a"/><path d="M367.6,213.8 L370,216.2 L365.8,217.4 Z" fill="#2a2a2a"/><rect x="385" y="213.1" width="10.8" height="3.7" fill="#a2a2a2"/><rect x="388.3" y="209" width="4.7" height="4.2" fill="#a2a2a2"/><rect x="394.2" y="209.5" width="1.8" height="2" fill="#a2a2a2"/><rect x="396.7" y="207" width="2.2" height="3.4" fill="#a2a2a2"/><rect x="396" y="202.4" width="3.7" height="3.2" fill="#a8a8a8"/><path d="M604,210.2 L607.5,213.6 L611,210.2" fill="none" stroke="#b0b0b0" stroke-width="1"/><g transform="translate(628.9 203.2)"><path d="M3.6,1.0 L7.4,0.2 L9.6,1.8 L9.6,5.2 L12.4,6.4 L12.4,9.8 L8.6,12.4 L0.4,6.8 L0.4,3.8 L3.6,3.0 Z" fill="#79b6d8" stroke="#2d6f96" stroke-width="0.6"/><path d="M3.6,3 L6.0,4.4 L9.6,3.4 M6,4.4 L6,7.2 L8.6,9 L12.4,6.6 M8.6,9 L8.6,12.4 M0.4,3.8 L6,7.2" fill="none" stroke="#2d6f96" stroke-width="0.5"/></g><path d="M678.8,205 V218.2" stroke="#666" stroke-width="1.1"/><path d="M678.8,211 H683.4" stroke="#666" stroke-width="0.9"/><rect x="683.4" y="208.4" width="6.6" height="5.4" fill="#ffd83a" stroke="#a88a00" stroke-width="0.7"/><path d="M622.8,242.6 v6.6 a3.7,1.6 0 0 0 7.4,0 v-6.6" fill="#c9c9c9" stroke="#767676" stroke-width="0.6"/><ellipse cx="626.5" cy="242.6" rx="3.7" ry="1.6" fill="#e6e6e6" stroke="#767676" stroke-width="0.6"/><path d="M622.8,244.8 a3.7,1.6 0 0 0 7.4,0 M622.8,247.0 a3.7,1.6 0 0 0 7.4,0" fill="none" stroke="#767676" stroke-width="0.5"/><rect x="627.4" y="247.9" width="9" height="6.4" fill="#fff"/><path d="M629.6,248.4 q-1.4,2.7 0,5.4 M634.6,248.4 q1.4,2.7 0,5.4" fill="none" stroke="#2b78b8" stroke-width="0.8"/><path d="M630.6,249.4 l3,3.4 M633.6,249.4 l-3,3.4" stroke="#2b78b8" stroke-width="0.8"/><path d="M622.8,260.85 v6.6 a3.7,1.6 0 0 0 7.4,0 v-6.6" fill="#c9c9c9" stroke="#767676" stroke-width="0.6"/><ellipse cx="626.5" cy="260.85" rx="3.7" ry="1.6" fill="#e6e6e6" stroke="#767676" stroke-width="0.6"/><path d="M622.8,263.05 a3.7,1.6 0 0 0 7.4,0 M622.8,265.25 a3.7,1.6 0 0 0 7.4,0" fill="none" stroke="#767676" stroke-width="0.5"/><rect x="627.4" y="266.15" width="9" height="6.4" fill="#fff"/><path d="M629.6,266.65 q-1.4,2.7 0,5.4 M634.6,266.65 q1.4,2.7 0,5.4" fill="none" stroke="#2b78b8" stroke-width="0.8"/><path d="M630.6,267.65 l3,3.4 M633.6,267.65 l-3,3.4" stroke="#2b78b8" stroke-width="0.8"/><path d="M622.8,279.1 v6.6 a3.7,1.6 0 0 0 7.4,0 v-6.6" fill="#c9c9c9" stroke="#767676" stroke-width="0.6"/><ellipse cx="626.5" cy="279.1" rx="3.7" ry="1.6" fill="#e6e6e6" stroke="#767676" stroke-width="0.6"/><path d="M622.8,281.3 a3.7,1.6 0 0 0 7.4,0 M622.8,283.5 a3.7,1.6 0 0 0 7.4,0" fill="none" stroke="#767676" stroke-width="0.5"/><rect x="627.4" y="284.4" width="9" height="6.4" fill="#fff"/><path d="M629.6,284.9 q-1.4,2.7 0,5.4 M634.6,284.9 q1.4,2.7 0,5.4" fill="none" stroke="#2b78b8" stroke-width="0.8"/><path d="M630.6,285.9 l3,3.4 M633.6,285.9 l-3,3.4" stroke="#2b78b8" stroke-width="0.8"/><path d="M622.8,297.35 v6.6 a3.7,1.6 0 0 0 7.4,0 v-6.6" fill="#c9c9c9" stroke="#767676" stroke-width="0.6"/><ellipse cx="626.5" cy="297.35" rx="3.7" ry="1.6" fill="#e6e6e6" stroke="#767676" stroke-width="0.6"/><path d="M622.8,299.55 a3.7,1.6 0 0 0 7.4,0 M622.8,301.75 a3.7,1.6 0 0 0 7.4,0" fill="none" stroke="#767676" stroke-width="0.5"/><rect x="627.4" y="302.65" width="9" height="6.4" fill="#fff"/><path d="M629.6,303.15 q-1.4,2.7 0,5.4 M634.6,303.15 q1.4,2.7 0,5.4" fill="none" stroke="#2b78b8" stroke-width="0.8"/><path d="M630.6,304.15 l3,3.4 M633.6,304.15 l-3,3.4" stroke="#2b78b8" stroke-width="0.8"/><path d="M622.8,315.6 v6.6 a3.7,1.6 0 0 0 7.4,0 v-6.6" fill="#c9c9c9" stroke="#767676" stroke-width="0.6"/><ellipse cx="626.5" cy="315.6" rx="3.7" ry="1.6" fill="#e6e6e6" stroke="#767676" stroke-width="0.6"/><path d="M622.8,317.8 a3.7,1.6 0 0 0 7.4,0 M622.8,320.0 a3.7,1.6 0 0 0 7.4,0" fill="none" stroke="#767676" stroke-width="0.5"/><rect x="627.4" y="320.9" width="9" height="6.4" fill="#fff"/><path d="M629.6,321.4 q-1.4,2.7 0,5.4 M634.6,321.4 q1.4,2.7 0,5.4" fill="none" stroke="#2b78b8" stroke-width="0.8"/><path d="M630.6,322.4 l3,3.4 M633.6,322.4 l-3,3.4" stroke="#2b78b8" stroke-width="0.8"/><path d="M622.8,333.85 v6.6 a3.7,1.6 0 0 0 7.4,0 v-6.6" fill="#c9c9c9" stroke="#767676" stroke-width="0.6"/><ellipse cx="626.5" cy="333.85" rx="3.7" ry="1.6" fill="#e6e6e6" stroke="#767676" stroke-width="0.6"/><path d="M622.8,336.05 a3.7,1.6 0 0 0 7.4,0 M622.8,338.25 a3.7,1.6 0 0 0 7.4,0" fill="none" stroke="#767676" stroke-width="0.5"/><rect x="627.4" y="339.15" width="9" height="6.4" fill="#fff"/><path d="M629.6,339.65 q-1.4,2.7 0,5.4 M634.6,339.65 q1.4,2.7 0,5.4" fill="none" stroke="#2b78b8" stroke-width="0.8"/><path d="M630.6,340.65 l3,3.4 M633.6,340.65 l-3,3.4" stroke="#2b78b8" stroke-width="0.8"/><path d="M622.8,352.1 v6.6 a3.7,1.6 0 0 0 7.4,0 v-6.6" fill="#c9c9c9" stroke="#767676" stroke-width="0.6"/><ellipse cx="626.5" cy="352.1" rx="3.7" ry="1.6" fill="#e6e6e6" stroke="#767676" stroke-width="0.6"/><path d="M622.8,354.3 a3.7,1.6 0 0 0 7.4,0 M622.8,356.5 a3.7,1.6 0 0 0 7.4,0" fill="none" stroke="#767676" stroke-width="0.5"/><rect x="627.4" y="357.4" width="9" height="6.4" fill="#fff"/><path d="M629.6,357.9 q-1.4,2.7 0,5.4 M634.6,357.9 q1.4,2.7 0,5.4" fill="none" stroke="#2b78b8" stroke-width="0.8"/><path d="M630.6,358.9 l3,3.4 M633.6,358.9 l-3,3.4" stroke="#2b78b8" stroke-width="0.8"/><path d="M622.8,370.35 v6.6 a3.7,1.6 0 0 0 7.4,0 v-6.6" fill="#c9c9c9" stroke="#767676" stroke-width="0.6"/><ellipse cx="626.5" cy="370.35" rx="3.7" ry="1.6" fill="#e6e6e6" stroke="#767676" stroke-width="0.6"/><path d="M622.8,372.55 a3.7,1.6 0 0 0 7.4,0 M622.8,374.75 a3.7,1.6 0 0 0 7.4,0" fill="none" stroke="#767676" stroke-width="0.5"/><rect x="627.4" y="375.65" width="9" height="6.4" fill="#fff"/><path d="M629.6,376.15 q-1.4,2.7 0,5.4 M634.6,376.15 q1.4,2.7 0,5.4" fill="none" stroke="#2b78b8" stroke-width="0.8"/><path d="M630.6,377.15 l3,3.4 M633.6,377.15 l-3,3.4" stroke="#2b78b8" stroke-width="0.8"/><path d="M622.8,388.6 v6.6 a3.7,1.6 0 0 0 7.4,0 v-6.6" fill="#c9c9c9" stroke="#767676" stroke-width="0.6"/><ellipse cx="626.5" cy="388.6" rx="3.7" ry="1.6" fill="#e6e6e6" stroke="#767676" stroke-width="0.6"/><path d="M622.8,390.8 a3.7,1.6 0 0 0 7.4,0 M622.8,393.0 a3.7,1.6 0 0 0 7.4,0" fill="none" stroke="#767676" stroke-width="0.5"/><rect x="627.4" y="393.9" width="9" height="6.4" fill="#fff"/><path d="M629.6,394.4 q-1.4,2.7 0,5.4 M634.6,394.4 q1.4,2.7 0,5.4" fill="none" stroke="#2b78b8" stroke-width="0.8"/><path d="M630.6,395.4 l3,3.4 M633.6,395.4 l-3,3.4" stroke="#2b78b8" stroke-width="0.8"/><path d="M622.8,406.85 v6.6 a3.7,1.6 0 0 0 7.4,0 v-6.6" fill="#c9c9c9" stroke="#767676" stroke-width="0.6"/><ellipse cx="626.5" cy="406.85" rx="3.7" ry="1.6" fill="#e6e6e6" stroke="#767676" stroke-width="0.6"/><path d="M622.8,409.05 a3.7,1.6 0 0 0 7.4,0 M622.8,411.25 a3.7,1.6 0 0 0 7.4,0" fill="none" stroke="#767676" stroke-width="0.5"/><rect x="627.4" y="412.15" width="9" height="6.4" fill="#fff"/><path d="M629.6,412.65 q-1.4,2.7 0,5.4 M634.6,412.65 q1.4,2.7 0,5.4" fill="none" stroke="#2b78b8" stroke-width="0.8"/><path d="M630.6,413.65 l3,3.4 M633.6,413.65 l-3,3.4" stroke="#2b78b8" stroke-width="0.8"/><path d="M622.8,425.1 v6.6 a3.7,1.6 0 0 0 7.4,0 v-6.6" fill="#c9c9c9" stroke="#767676" stroke-width="0.6"/><ellipse cx="626.5" cy="425.1" rx="3.7" ry="1.6" fill="#e6e6e6" stroke="#767676" stroke-width="0.6"/><path d="M622.8,427.3 a3.7,1.6 0 0 0 7.4,0 M622.8,429.5 a3.7,1.6 0 0 0 7.4,0" fill="none" stroke="#767676" stroke-width="0.5"/><rect x="627.4" y="430.4" width="9" height="6.4" fill="#fff"/><path d="M629.6,430.9 q-1.4,2.7 0,5.4 M634.6,430.9 q1.4,2.7 0,5.4" fill="none" stroke="#2b78b8" stroke-width="0.8"/><path d="M630.6,431.9 l3,3.4 M633.6,431.9 l-3,3.4" stroke="#2b78b8" stroke-width="0.8"/><path d="M622.8,443.35 v6.6 a3.7,1.6 0 0 0 7.4,0 v-6.6" fill="#c9c9c9" stroke="#767676" stroke-width="0.6"/><ellipse cx="626.5" cy="443.35" rx="3.7" ry="1.6" fill="#e6e6e6" stroke="#767676" stroke-width="0.6"/><path d="M622.8,445.55 a3.7,1.6 0 0 0 7.4,0 M622.8,447.75 a3.7,1.6 0 0 0 7.4,0" fill="none" stroke="#767676" stroke-width="0.5"/><rect x="627.4" y="448.65" width="9" height="6.4" fill="#fff"/><path d="M629.6,449.15 q-1.4,2.7 0,5.4 M634.6,449.15 q1.4,2.7 0,5.4" fill="none" stroke="#2b78b8" stroke-width="0.8"/><path d="M630.6,450.15 l3,3.4 M633.6,450.15 l-3,3.4" stroke="#2b78b8" stroke-width="0.8"/><path d="M622.8,461.6 v6.6 a3.7,1.6 0 0 0 7.4,0 v-6.6" fill="#c9c9c9" stroke="#767676" stroke-width="0.6"/><ellipse cx="626.5" cy="461.6" rx="3.7" ry="1.6" fill="#e6e6e6" stroke="#767676" stroke-width="0.6"/><path d="M622.8,463.8 a3.7,1.6 0 0 0 7.4,0 M622.8,466.0 a3.7,1.6 0 0 0 7.4,0" fill="none" stroke="#767676" stroke-width="0.5"/><rect x="627.4" y="466.9" width="9" height="6.4" fill="#fff"/><path d="M629.6,467.4 q-1.4,2.7 0,5.4 M634.6,467.4 q1.4,2.7 0,5.4" fill="none" stroke="#2b78b8" stroke-width="0.8"/><path d="M630.6,468.4 l3,3.4 M633.6,468.4 l-3,3.4" stroke="#2b78b8" stroke-width="0.8"/><polygon points="628.1,481.1 628.2,479.1 630.4,479.1 630.5,481.1 631.5,481.5 633.0,480.2 634.5,481.8 633.2,483.2 633.6,484.2 635.6,484.4 635.6,486.5 633.6,486.7 633.2,487.7 634.5,489.1 633.0,490.7 631.5,489.4 630.5,489.8 630.4,491.8 628.2,491.8 628.1,489.8 627.1,489.4 625.6,490.7 624.1,489.1 625.4,487.7 625.0,486.7 623.0,486.5 623.0,484.4 625.0,484.2 625.4,483.2 624.1,481.8 625.6,480.2 627.1,481.5" fill="#6e6e6e"/><circle cx="629.3" cy="485.45000000000005" r="4.6" fill="#6e6e6e"/><rect x="627.9499999999999" y="480.05000000000007" width="2.7" height="8.2" rx="1" fill="#f4f4f4"/><polygon points="628.1,499.4 628.2,497.4 630.4,497.4 630.5,499.4 631.5,499.8 633.0,498.5 634.5,500.0 633.2,501.5 633.6,502.5 635.6,502.6 635.6,504.8 633.6,504.9 633.2,505.9 634.5,507.4 633.0,508.9 631.5,507.6 630.5,508.0 630.4,510.0 628.2,510.0 628.1,508.0 627.1,507.6 625.6,508.9 624.1,507.4 625.4,505.9 625.0,504.9 623.0,504.8 623.0,502.6 625.0,502.5 625.4,501.5 624.1,500.0 625.6,498.5 627.1,499.8" fill="#6e6e6e"/><circle cx="629.3" cy="503.70000000000005" r="4.6" fill="#6e6e6e"/><rect x="627.9499999999999" y="498.30000000000007" width="2.7" height="8.2" rx="1" fill="#f4f4f4"/><path d="M1014,230 L1016.5,227.2 L1019,230" fill="none" stroke="#444" stroke-width="1.2"/><path d="M1014,492 L1016.5,494.8 L1019,492" fill="none" stroke="#444" stroke-width="1.2"/>
<path d="M547.6,225.9 H554.4" stroke="#b8ac32" stroke-width="1"/><path d="M553,224.2 L555.4,225.9 L553,227.6" fill="none" stroke="#b8ac32" stroke-width="0.9"/><path d="M557.2,222.2 V229.8" stroke="#b8ac32" stroke-width="1.1"/><circle cx="562" cy="226.2" r="3" fill="#aaa030"/><path d="M560.4,226.4 H563.6 A1.6,1.6 0 1 0 562,228" fill="none" stroke="#39422e" stroke-width="0.8"/>
<text transform="translate(33 452.7) scale(0.6 1)" font-family="Liberation Sans, sans-serif" font-size="9" fill="#2828e0">Z</text>
<text transform="translate(17.2 456.8) scale(0.62 1)" font-family="Liberation Sans, sans-serif" font-size="8.2" fill="#30d030">Y</text>
<text transform="translate(18.2 470.8) scale(0.62 1)" font-family="Liberation Sans, sans-serif" font-size="8.2" fill="#e04858">X</text>
<text x="567.6" y="229.2" font-family="Liberation Sans, sans-serif" font-size="7.4" font-weight="bold" letter-spacing="0.45" fill="#34403c">DRAWINGS</text>
<text x="612.2" y="225.6" font-family="Liberation Sans, sans-serif" font-size="4" fill="#3a4434">®</text>
</svg>
<div class="a" style="left:0;top:500.5px;width:1024px;height:22.5px;background:#fff"></div>
<svg width="1024" height="523" viewBox="0 0 1024 523"><rect x="978.5" y="501.5" width="21" height="24" fill="#cde6f7" stroke="#8fc6ee" stroke-width="1"/><rect x="983.6" y="507.4" width="1.6" height="1.6" fill="#9a9a9a"/><path d="M986.8,508.2 H990.6 M992.2,508.2 H996" stroke="#8a8a8a" stroke-width="0.9"/><rect x="983.6" y="510.2" width="1.6" height="1.6" fill="#9a9a9a"/><path d="M986.8,511 H990.6 M992.2,511 H996" stroke="#8a8a8a" stroke-width="0.9"/><rect x="983.6" y="513.0" width="1.6" height="1.6" fill="#d04040"/><path d="M986.8,513.8 H990.6 M992.2,513.8 H996" stroke="#8a8a8a" stroke-width="0.9"/><rect x="983.6" y="515.8000000000001" width="1.6" height="1.6" fill="#9a9a9a"/><path d="M986.8,516.6 H990.6 M992.2,516.6 H996" stroke="#8a8a8a" stroke-width="0.9"/><rect x="983.6" y="518.6" width="1.6" height="1.6" fill="#9a9a9a"/><path d="M986.8,519.4 H990.6 M992.2,519.4 H996" stroke="#8a8a8a" stroke-width="0.9"/><rect x="1003.4" y="507.6" width="13.2" height="9.4" fill="url(#gpic)" stroke="#b8b8b8" stroke-width="0.8"/><path d="M1003.8,515 Q1008,510.5 1012,513.4 L1016.2,514.6 V516.6 H1003.8Z" fill="#3f7f58"/></svg>
<div class="t" style="left:28.30px;top:0.52px;font-size:11.5px;color:#1a1a1a;letter-spacing:-0.003px;">Actions</div>
<div class="t" style="left:71.05px;top:0.52px;font-size:11.5px;color:#1a1a1a;letter-spacing:0.332px;">Modify</div>
<div class="t" style="left:111.80px;top:0.52px;font-size:11.5px;color:#1a1a1a;letter-spacing:-0.157px;">Display</div>
<div class="t" style="left:153.55px;top:0.52px;font-size:11.5px;color:#1a1a1a;letter-spacing:0.020px;">Tools</div>
<div class="t" style="left:744.30px;top:0.02px;font-size:11.5px;color:#6d6d6d;letter-spacing:-0.031px;">Search in Current Folder</div>
<div class="t" style="left:9.30px;top:23.02px;font-size:11.5px;color:#1a1a1a;letter-spacing:0.146px;">Name</div>
<div class="t" style="left:235.30px;top:23.02px;font-size:11.5px;color:#1a1a1a;letter-spacing:-0.040px;">Checked Out By</div>
<div class="t" style="left:420.55px;top:23.02px;font-size:11.5px;color:#1a1a1a;letter-spacing:-0.336px;">Size</div>
<div class="t" style="left:447.30px;top:23.02px;font-size:11.5px;color:#1a1a1a;letter-spacing:-0.139px;">Type</div>
<div class="t" style="left:495.30px;top:23.02px;font-size:11.5px;color:#1a1a1a;letter-spacing:-0.147px;">State</div>
<div class="t" style="left:622.05px;top:23.02px;font-size:11.5px;color:#1a1a1a;letter-spacing:-0.250px;">Date ...</div>
<div class="t" style="left:669.35px;top:23.02px;font-size:11.5px;color:#1a1a1a;transform:scaleX(0.929);transform-origin:0 0;">Check...</div>
<div class="t" style="left:717.30px;top:23.02px;font-size:11.5px;color:#1a1a1a;letter-spacing:-0.277px;">Categ...</div>
<div class="t" style="left:25.24px;top:41.77px;font-size:11.5px;color:#1a1a1a;transform:scaleX(0.801);transform-origin:0 0;">SR</div>
<div class="t" style="left:447.30px;top:41.77px;font-size:11.5px;color:#1a1a1a;letter-spacing:0.016px;">Folder</div>
<div class="t" style="left:24.60px;top:60.02px;font-size:11.5px;color:#1a1a1a;letter-spacing:0.095px;">New Microsoft Word Document.docx</div>
<div class="t" style="left:417.30px;top:60.02px;font-size:11.5px;color:#1a1a1a;letter-spacing:-0.211px;">0 KB</div>
<div class="t" style="left:447.80px;top:60.02px;font-size:11.5px;color:#1a1a1a;letter-spacing:-0.206px;">Micros...</div>
<div class="t" style="left:517.30px;top:60.02px;font-size:11.5px;color:#1a1a1a;letter-spacing:0.129px;">Approved</div>
<div class="t" style="left:621.80px;top:60.02px;font-size:11.5px;color:#1a1a1a;letter-spacing:-0.240px;">2020-...</div>
<div class="t" style="left:717.80px;top:60.02px;font-size:11.5px;color:#1a1a1a;letter-spacing:0.856px;">-</div>
<div class="t" style="left:24.66px;top:78.02px;font-size:11.5px;color:#1a1a1a;transform:scaleX(0.914);transform-origin:0 0;">Part1.SLDDRW</div>
<div class="t" style="left:405.55px;top:78.02px;font-size:11.5px;color:#1a1a1a;letter-spacing:-0.324px;">106 KB</div>
<div class="t" style="left:447.86px;top:78.02px;font-size:11.5px;color:#1a1a1a;transform:scaleX(0.911);transform-origin:0 0;">SOLID...</div>
<div class="t" style="left:517.30px;top:78.02px;font-size:11.5px;color:#1a1a1a;letter-spacing:0.041px;">Under Editing</div>
<div class="t" style="left:621.80px;top:78.02px;font-size:11.5px;color:#1a1a1a;letter-spacing:-0.240px;">2020-...</div>
<div class="t" style="left:717.80px;top:78.02px;font-size:11.5px;color:#1a1a1a;letter-spacing:0.856px;">-</div>
<div class="t" style="left:24.69px;top:96.02px;font-size:11.5px;color:#1a1a1a;transform:scaleX(0.875);transform-origin:0 0;">Part1.SLDPRT</div>
<div class="t" style="left:404.80px;top:96.02px;font-size:11.5px;color:#1a1a1a;letter-spacing:-0.188px;">222 KB</div>
<div class="t" style="left:447.86px;top:96.02px;font-size:11.5px;color:#1a1a1a;transform:scaleX(0.911);transform-origin:0 0;">SOLID...</div>
<div class="t" style="left:517.30px;top:96.02px;font-size:11.5px;color:#1a1a1a;letter-spacing:0.041px;">Under Editing</div>
<div class="t" style="left:621.80px;top:96.02px;font-size:11.5px;color:#1a1a1a;letter-spacing:-0.240px;">2020-...</div>
<div class="t" style="left:717.80px;top:96.02px;font-size:11.5px;color:#1a1a1a;letter-spacing:0.856px;">-</div>
<div class="t" style="left:24.50px;top:114.27px;font-size:11.5px;color:#1a1a1a;letter-spacing:-0.064px;">virtual component.SLDASM</div>
<div class="t" style="left:411.05px;top:114.27px;font-size:11.5px;color:#1a1a1a;letter-spacing:-0.195px;">45 KB</div>
<div class="t" style="left:447.86px;top:114.27px;font-size:11.5px;color:#1a1a1a;transform:scaleX(0.911);transform-origin:0 0;">SOLID...</div>
<div class="t" style="left:517.30px;top:114.27px;font-size:11.5px;color:#1a1a1a;letter-spacing:0.041px;">Under Editing</div>
<div class="t" style="left:621.80px;top:114.27px;font-size:11.5px;color:#1a1a1a;letter-spacing:-0.240px;">2020-...</div>
<div class="t" style="left:717.80px;top:114.27px;font-size:11.5px;color:#1a1a1a;letter-spacing:0.856px;">-</div>
<div class="t" style="left:29.30px;top:179.50px;font-size:10.4px;color:#2a4470;letter-spacing:0.189px;">Preview</div>
<div class="t" style="left:95.30px;top:179.50px;font-size:10.4px;color:#2a4470;letter-spacing:0.028px;">Data Card</div>
<div class="t" style="left:170.30px;top:179.50px;font-size:10.4px;color:#2a4470;letter-spacing:0.190px;">Version 2/2</div>
<div class="t" style="left:252.50px;top:179.50px;font-size:10.4px;color:#2a4470;letter-spacing:0.057px;">Bill of Materials</div>
<div class="t" style="left:352.30px;top:179.50px;font-size:10.4px;color:#2a4470;letter-spacing:0.065px;">Contains</div>
<div class="t" style="left:420.90px;top:179.50px;font-size:10.4px;color:#2a4470;letter-spacing:0.089px;">Where Used</div>
<div class="t" style="left:648.30px;top:202.56px;font-size:10.5px;color:#333;letter-spacing:0.528px;">@</div>
<div class="t" style="left:697.10px;top:204.02px;font-size:11.5px;color:#1a1a1a;letter-spacing:0.256px;">Default</div>
<div class="t" style="left:622.30px;top:221.42px;font-size:11.5px;color:#1a1a1a;letter-spacing:-0.126px;">Variable</div>
<div class="t" style="left:812.70px;top:221.42px;font-size:11.5px;color:#1a1a1a;letter-spacing:-0.125px;">Value</div>
<div class="t" style="left:637.30px;top:240.02px;font-size:11.5px;color:#1a1a1a;letter-spacing:0.347px;">Author</div>
<div class="t" style="left:812.70px;top:240.02px;font-size:11.5px;color:#1a1a1a;letter-spacing:0.265px;">Admin</div>
<div class="t" style="left:637.30px;top:258.27px;font-size:11.5px;color:#1a1a1a;letter-spacing:-0.073px;">Cost</div>
<div class="t" style="left:637.30px;top:276.52px;font-size:11.5px;color:#1a1a1a;letter-spacing:0.172px;">Date</div>
<div class="t" style="left:812.70px;top:276.52px;font-size:11.5px;color:#1a1a1a;letter-spacing:0.134px;">2020-10-14</div>
<div class="t" style="left:637.30px;top:294.77px;font-size:11.5px;color:#1a1a1a;letter-spacing:0.083px;">Description</div>
<div class="t" style="left:812.77px;top:294.77px;font-size:11.5px;color:#1a1a1a;transform:scaleX(0.899);transform-origin:0 0;">YOKE / SAW PIVOT</div>
<div class="t" style="left:637.30px;top:313.02px;font-size:11.5px;color:#1a1a1a;letter-spacing:0.233px;">Document Number</div>
<div class="t" style="left:637.30px;top:331.27px;font-size:11.5px;color:#1a1a1a;letter-spacing:0.173px;">Material</div>
<div class="t" style="left:812.70px;top:331.27px;font-size:11.5px;color:#1a1a1a;letter-spacing:0.178px;">Material &lt;not specified&gt;</div>
<div class="t" style="left:637.30px;top:349.52px;font-size:11.5px;color:#1a1a1a;letter-spacing:0.381px;">Number</div>
<div class="t" style="left:812.70px;top:349.52px;font-size:11.5px;color:#1a1a1a;letter-spacing:-0.144px;">SW-0102</div>
<div class="t" style="left:637.30px;top:367.77px;font-size:11.5px;color:#1a1a1a;letter-spacing:-0.167px;">Part Type</div>
<div class="t" style="left:637.30px;top:386.02px;font-size:11.5px;color:#1a1a1a;letter-spacing:0.020px;">Project Name</div>
<div class="t" style="left:637.30px;top:404.27px;font-size:11.5px;color:#1a1a1a;letter-spacing:0.127px;">Project number</div>
<div class="t" style="left:637.30px;top:422.52px;font-size:11.5px;color:#1a1a1a;letter-spacing:-0.148px;">Revision</div>
<div class="t" style="left:637.30px;top:440.77px;font-size:11.5px;color:#1a1a1a;letter-spacing:0.136px;">Vendor</div>
<div class="t" style="left:637.30px;top:459.02px;font-size:11.5px;color:#1a1a1a;letter-spacing:0.292px;">Weight</div>
<div class="t" style="left:812.70px;top:459.02px;font-size:11.5px;color:#1a1a1a;letter-spacing:-0.144px;">0.32 kg</div>
<div class="t" style="left:637.30px;top:477.27px;font-size:11.5px;color:#1a1a1a;letter-spacing:-0.155px;">Local state</div>
<div class="t" style="left:812.70px;top:477.27px;font-size:11.5px;color:#1a1a1a;letter-spacing:0.057px;">Under Editing</div>
<div class="t" style="left:637.35px;top:495.52px;font-size:11.5px;color:#1a1a1a;transform:scaleX(0.927);transform-origin:0 0;clip-path:inset(0 0 11.0px 0);">Local revision</div>
<div class="t" style="left:812.70px;top:495.52px;font-size:11.5px;color:#1a1a1a;letter-spacing:0.216px;clip-path:inset(0 0 11.0px 0);">No revision</div>
</body>
</html>
